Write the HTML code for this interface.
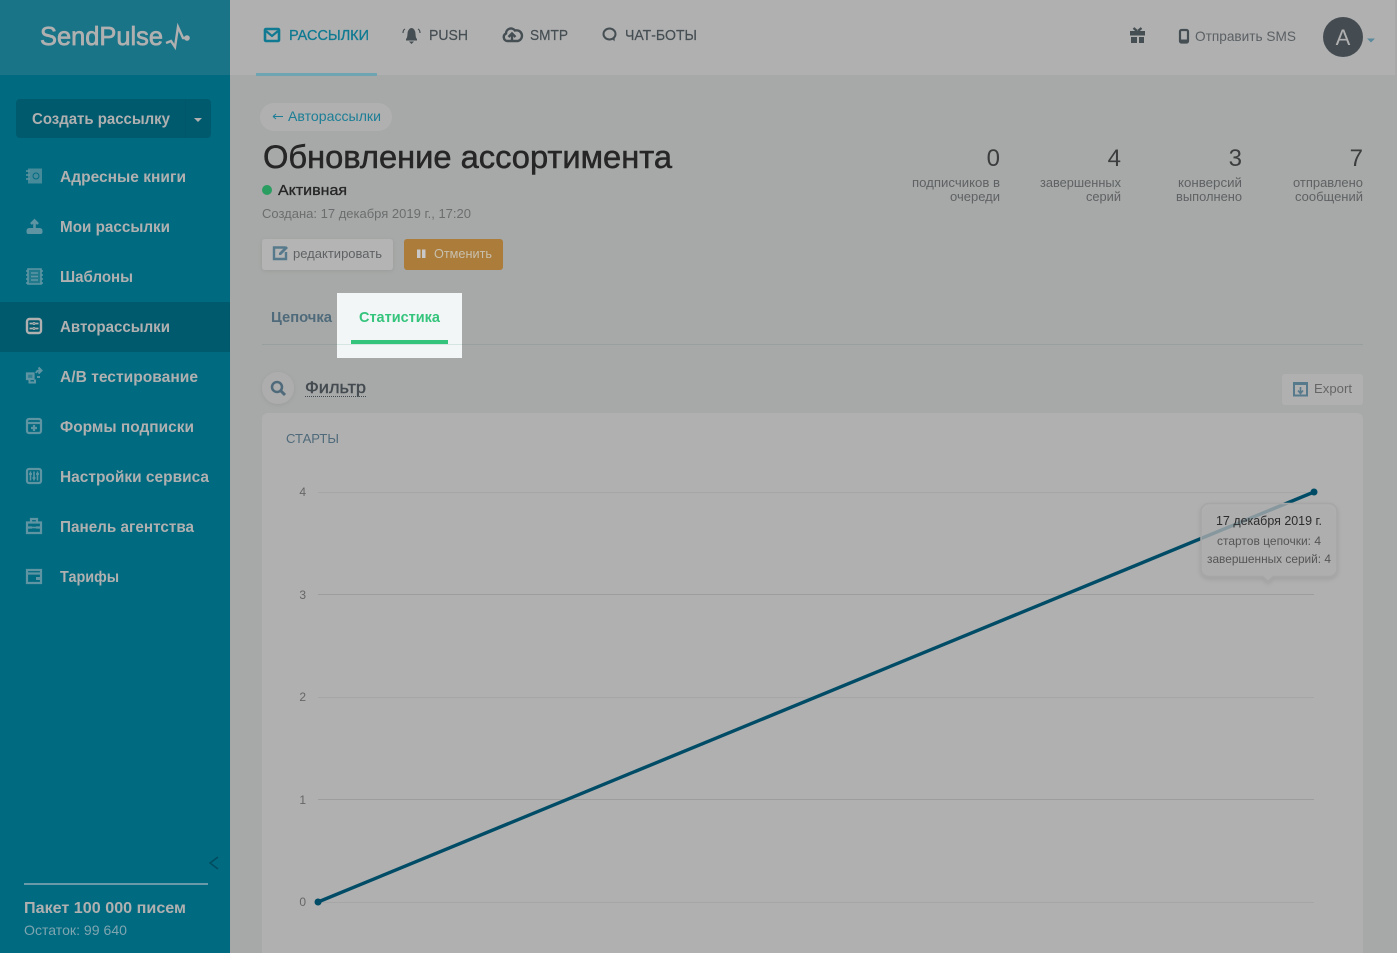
<!DOCTYPE html>
<html lang="ru"><head><meta charset="utf-8"><title>SendPulse</title>
<style>
html,body{margin:0;padding:0;width:1397px;height:953px;overflow:hidden;background:#a7a9a8}
svg{display:block}
text{font-family:"Liberation Sans","DejaVu Sans",sans-serif}
.s{font-weight:700;font-size:15.5px;fill:#b0b0b0}
.ic{fill:none;stroke:#5f95a3;stroke-width:2.200}
.n{font-size:14.5px;fill:#454e53;stroke:#454e53;stroke-width:.2}
.lb{font-size:13px;fill:#5f6264;text-anchor:end}
.num{font-size:24px;fill:#3b3d3e;text-anchor:end}
.ax{font-size:12px;fill:#666;text-anchor:end}
.gr{stroke:#9d9d9d;stroke-width:1}
.gl{stroke:#a6a6a6;stroke-width:1}
</style></head><body>
<svg width="1397" height="953" viewBox="0 0 1397 953" xmlns="http://www.w3.org/2000/svg">
<defs>
<filter id="sh" x="-20%" y="-20%" width="140%" height="150%"><feDropShadow dx="0" dy="2" stdDeviation="2.500" flood-color="#000" flood-opacity=".12"/></filter>
<filter id="sh2" x="-20%" y="-20%" width="140%" height="150%"><feDropShadow dx="0" dy="1" stdDeviation="2" flood-color="#000" flood-opacity=".08"/></filter>
</defs>
<rect width="1397" height="953" fill="#a7a9a8"/>
<!-- top bar -->
<rect x="230" width="1167" height="75" fill="#b0b0b0"/>
<rect x="1395" width="2" height="75" fill="#a9a9a9"/>
<rect x="256" y="73" width="121" height="3" fill="#6fa5b3"/>
<!-- sidebar -->
<rect width="230" height="953" fill="#006a80"/>
<rect width="230" height="75" fill="#1a7488"/>
<text x="40" y="45" font-size="26" fill="#b0b0b0" stroke="#b0b0b0" stroke-width=".7" textLength="123" lengthAdjust="spacingAndGlyphs">SendPulse</text>
<path d="M166 43L171 41 175 47 178 27 183 38H187" fill="none" stroke="#b0b0b0" stroke-width="2.400"/><circle cx="187" cy="38" r="2.800" fill="#b0b0b0"/>
<rect x="16" y="99" width="195" height="39" rx="4" fill="#005a6e"/>
<rect x="185" y="99" width="1" height="39" fill="#00566a"/>
<text class="s" x="32" y="124" textLength="138" lengthAdjust="spacingAndGlyphs">Создать рассылку</text>
<path d="M194 118h8l-4 4z" fill="#b0b0b0"/>
<rect y="302" width="230" height="50" fill="#005a6e"/>

<g class="ic">
<path d="M28 168.500h14v15H28z" fill="#5f95a3" fill-opacity=".75" stroke="none"/><path d="M26 171h4M26 175h4M26 179h4" stroke-width="1.500"/><circle cx="36" cy="176" r="3" stroke="#006a80" stroke-width="1"/>
<path d="M26.500 231q0-3 3-3h10q3 0 3 3v1q0 2-2 2H28.500q-2 0-2-2z" fill="#5f95a3" stroke="none"/><path d="M34.500 230v-9M31 224l3.500-3.500 3.500 3.500" stroke-width="2.600"/>
<path d="M28 269h13v15H28z" fill="#5f95a3" fill-opacity=".35" stroke-width="1.600"/><path d="M26 271h2M26 275h2M26 279h2M26 283h2M41 271h2M41 275h2M41 279h2M41 283h2M31 273h7M31 276.500h7M31 280h7" stroke-width="1.600"/>
<g stroke="#b0b0b0"><rect x="27" y="319" width="14" height="14" rx="2.500" stroke-width="2.400"/><path d="M29.500 323.500h3M35.500 323.500h3M29.500 328.500h3M35.500 328.500h3" stroke-width="1.800"/><circle cx="34" cy="323.500" r="1" stroke-width="1"/><circle cx="34" cy="328.500" r="1" stroke-width="1"/></g>
<path d="M27 373.500h6.500v5.500H27z" fill="#5f95a3" fill-opacity=".5"/><path d="M29.500 380v2.500h5.500v-3" stroke-width="2"/><path d="M36 373q1-3 5-2.500M38.500 367.500l3 3-3 3M37 377h3" stroke-width="2"/>
<rect x="27" y="419" width="14" height="14" rx="2"/><path d="M27 423h14M34 425v6M31 428h6"/>
<rect x="27" y="469" width="14" height="14" rx="2"/><path d="M30.500 471.500v9M34 471.500v9M37.500 471.500v9" stroke-width="1.600"/><path d="M29 474h3M32.500 478h3M36 474h3" stroke-width="1.800"/>
<path d="M27 522.500h14v10.500H27zM31 522v-3h6v3M27 527.500h5M36 527.500h5"/><path d="M32 527.500h4" stroke-width="1.600"/>
<path d="M27 570h14v13H27zM27 573.500h14" /><path d="M36 577h5v3h-5z" fill="#5f95a3" stroke="none"/>
</g>
<text class="s" x="60" y="182" textLength="126" lengthAdjust="spacingAndGlyphs">Адресные книги</text>
<text class="s" x="60" y="232" textLength="110" lengthAdjust="spacingAndGlyphs">Мои рассылки</text>
<text class="s" x="60" y="282" textLength="73" lengthAdjust="spacingAndGlyphs">Шаблоны</text>
<text class="s" x="60" y="332" textLength="110" lengthAdjust="spacingAndGlyphs">Авторассылки</text>
<text class="s" x="60" y="382" textLength="138" lengthAdjust="spacingAndGlyphs">А/В тестирование</text>
<text class="s" x="60" y="432" textLength="134" lengthAdjust="spacingAndGlyphs">Формы подписки</text>
<text class="s" x="60" y="482" textLength="149" lengthAdjust="spacingAndGlyphs">Настройки сервиса</text>
<text class="s" x="60" y="532" textLength="134" lengthAdjust="spacingAndGlyphs">Панель агентства</text>
<text class="s" x="60" y="582" textLength="59" lengthAdjust="spacingAndGlyphs">Тарифы</text>
<path d="M218 857l-8 6 8 6" fill="none" stroke="#004c5f" stroke-width="1.500"/>
<rect x="24" y="883" width="184" height="2" fill="#6a9aa8"/>
<text class="s" x="24" y="913" textLength="162" lengthAdjust="spacingAndGlyphs">Пакет 100 000 писем</text>
<text x="24" y="935" font-size="14" fill="#7fa5b0" textLength="103" lengthAdjust="spacingAndGlyphs">Остаток: 99 640</text>

<!-- nav -->
<rect x="265" y="29" width="14" height="12" rx="1" fill="none" stroke="#0f7a92" stroke-width="2.600"/><path d="M266 31l6 5 6-5" fill="none" stroke="#0f7a92" stroke-width="2.200"/>
<text x="289" y="40" font-size="14.500" fill="#0f7a92" stroke="#0f7a92" stroke-width=".3" textLength="80" lengthAdjust="spacingAndGlyphs">РАССЫЛКИ</text>
<path d="M406 39c2-2 1-5 2-8 1-2 2-3 3.500-3s2.500 1 3.500 3c1 3 0 6 2 8v1.500h-11zM409 41.500h5l-2.500 2.500z" fill="#454e53"/><path d="M403 33q0-3 2-4M420 33q0-3-2-4" fill="none" stroke="#454e53" stroke-width="1.200"/>
<text class="n" x="429" y="40" textLength="39" lengthAdjust="spacingAndGlyphs">PUSH</text>
<path d="M507 41a4 4 0 0 1-1-7.500 5 5 0 0 1 9-3 4.500 4.500 0 0 1 3 10.500z" fill="none" stroke="#454e53" stroke-width="2.400"/><path d="M512 42v-8M508.500 37l3.500-3.500 3.500 3.500" fill="none" stroke="#454e53" stroke-width="2.400"/>
<text class="n" x="530" y="40" textLength="38" lengthAdjust="spacingAndGlyphs">SMTP</text>
<ellipse cx="609.500" cy="34" rx="6" ry="5.500" fill="none" stroke="#454e53" stroke-width="2"/><path d="M612 38.500l2.500 3 .3-4z" fill="#454e53"/>
<text class="n" x="625" y="40" textLength="72" lengthAdjust="spacingAndGlyphs">ЧАТ-БОТЫ</text>
<path d="M1130 31h15v4.500h-15zM1131 37h6v6h-6zM1139 37h5v6h-5z" fill="#454e53"/><path d="M1137 31l-3.500-3M1138 31l3.500-3" stroke="#454e53" stroke-width="2.400" fill="none"/>
<rect x="1180" y="30" width="8" height="12.500" rx="1.500" fill="none" stroke="#454e53" stroke-width="2.200"/><rect x="1181" y="39.500" width="6" height="3" fill="#454e53"/>
<text x="1195" y="41" font-size="14" fill="#5b6064" textLength="101" lengthAdjust="spacingAndGlyphs">Отправить SMS</text>
<circle cx="1343" cy="37" r="20" fill="#444c52"/>
<text x="1343" y="45" font-size="22" fill="#b0b0b0" text-anchor="middle">A</text>
<path d="M1367 38.500h8l-4 4z" fill="#5a8a9b"/>

<!-- head -->
<rect x="260" y="103" width="132" height="28" rx="14" fill="#b0b0b0"/>
<path d="M273 116.500h10M273 116.500l3-2.500M273 116.500l3 2.500" stroke="#1b7e96" fill="none"/>
<text x="288" y="121" font-size="14" fill="#1b7e96" textLength="93" lengthAdjust="spacingAndGlyphs">Авторассылки</text>
<text x="263" y="168" font-size="32" fill="#262626" stroke="#262626" stroke-width=".5" textLength="409" lengthAdjust="spacingAndGlyphs">Обновление ассортимента</text>
<circle cx="267" cy="190" r="5" fill="#2a9d60"/>
<text x="278" y="195" font-size="14.500" fill="#262626" stroke="#262626" stroke-width=".3" textLength="69" lengthAdjust="spacingAndGlyphs">Активная</text>
<text x="262" y="218" font-size="13" fill="#6b6e6f" textLength="209" lengthAdjust="spacingAndGlyphs">Создана: 17 декабря 2019 г., 17:20</text>
<rect x="262" y="239" width="131" height="31" rx="3" fill="#b4b4b4" filter="url(#sh2)"/>
<path d="M284 248v-.500h-10v11.500h12v-7" fill="none" stroke="#567a8c" stroke-width="2.400"/><path d="M279 253l7-7 2 2-7 7h-2z" fill="#567a8c"/>
<text x="293" y="258" font-size="13" fill="#5f6264" textLength="89" lengthAdjust="spacingAndGlyphs">редактировать</text>
<rect x="404" y="239" width="99" height="31" rx="3" fill="#ab7c3a"/>
<path d="M417 249.500h3.500v8.500H417zM422 249.500h3.500v8.500H422z" fill="#c8c8c8"/>
<text x="434" y="258" font-size="13" fill="#c8c0ae" textLength="58" lengthAdjust="spacingAndGlyphs">Отменить</text>

<!-- stats -->
<text class="num" x="1000" y="166">0</text><text class="num" x="1121" y="166">4</text><text class="num" x="1242" y="166">3</text><text class="num" x="1363" y="166">7</text>
<text class="lb" x="1000" y="187" textLength="88" lengthAdjust="spacingAndGlyphs">подписчиков в</text><text class="lb" x="1000" y="201" textLength="50" lengthAdjust="spacingAndGlyphs">очереди</text>
<text class="lb" x="1121" y="187" textLength="81" lengthAdjust="spacingAndGlyphs">завершенных</text><text class="lb" x="1121" y="201" textLength="35" lengthAdjust="spacingAndGlyphs">серий</text>
<text class="lb" x="1242" y="187" textLength="64" lengthAdjust="spacingAndGlyphs">конверсий</text><text class="lb" x="1242" y="201" textLength="66" lengthAdjust="spacingAndGlyphs">выполнено</text>
<text class="lb" x="1363" y="187" textLength="70" lengthAdjust="spacingAndGlyphs">отправлено</text><text class="lb" x="1363" y="201" textLength="68" lengthAdjust="spacingAndGlyphs">сообщений</text>

<!-- tabs -->
<rect x="262" y="344" width="1101" height="1" fill="#97a09f"/>
<text x="271" y="322" font-size="15" font-weight="700" fill="#4f6a7a" textLength="61" lengthAdjust="spacingAndGlyphs">Цепочка</text>
<rect x="337" y="293" width="125" height="65" fill="#f2f6f7"/>
<rect x="337" y="344" width="125" height="1" fill="#d5e5e2"/>
<text x="359" y="322" font-size="15" font-weight="700" fill="#34c47c" textLength="81" lengthAdjust="spacingAndGlyphs">Статистика</text>
<rect x="351" y="340" width="97" height="4" fill="#34c47c"/>

<!-- filter -->
<circle cx="278" cy="388" r="16" fill="#adadad" filter="url(#sh2)"/>
<circle cx="277" cy="387" r="5" fill="none" stroke="#4f6a7a" stroke-width="2.500"/><path d="M281 391l4 4" stroke="#4f6a7a" stroke-width="3" fill="none"/>
<text x="305" y="393" font-size="17" fill="#444b50" stroke="#444b50" stroke-width=".4" textLength="61" lengthAdjust="spacingAndGlyphs">Фильтр</text>
<path d="M305 396.500h61" stroke="#444b50" stroke-dasharray="1 1" fill="none"/>
<rect x="1282" y="374" width="81" height="31" rx="3" fill="#b0b0b0"/>
<path d="M1294 383h13v12.500h-13z" fill="none" stroke="#567a8c" stroke-width="2"/><path d="M1294 383.500h13" stroke="#567a8c" stroke-width="3"/><path d="M1300.500 387v5M1298 390.500l2.500 3 2.500-3" fill="none" stroke="#567a8c" stroke-width="1.600"/>
<text x="1314" y="393" font-size="13" fill="#666" textLength="38" lengthAdjust="spacingAndGlyphs">Export</text>

<!-- card -->
<rect x="262" y="413" width="1101" height="560" rx="6" fill="#b0b0b0"/>
<text x="286" y="443" font-size="13" fill="#4f6a7a" textLength="53" lengthAdjust="spacingAndGlyphs">СТАРТЫ</text>
<path class="gl" d="M318 492.500h996M318 697.500h996M318 902.500h996"/>
<path class="gr" d="M318 594.500h996M318 799.500h996"/>
<text class="ax" x="306" y="496">4</text><text class="ax" x="306" y="599">3</text><text class="ax" x="306" y="701">2</text><text class="ax" x="306" y="804">1</text><text class="ax" x="306" y="906">0</text>
<path d="M318 902L1314 492" stroke="#004c66" stroke-width="3.400" fill="none"/>
<circle cx="318" cy="902" r="3.500" fill="#004c66"/><circle cx="1314" cy="492" r="3.500" fill="#004c66"/>
<!-- tooltip -->
<path d="M1209 503.500h120a8 8 0 0 1 8 8v57a8 8 0 0 1-8 8h-56l-5 5-5-5h-54a8 8 0 0 1-8-8v-57a8 8 0 0 1 8-8z" fill="#b0b0b0" fill-opacity=".75" stroke="#a6a6a6" stroke-width="1.500" filter="url(#sh)"/>
<text x="1216" y="525" font-size="13" fill="#2c2c2c" textLength="106" lengthAdjust="spacingAndGlyphs">17 декабря 2019 г.</text>
<text x="1217" y="545" font-size="12" fill="#555" textLength="104" lengthAdjust="spacingAndGlyphs">стартов цепочки: 4</text>
<text x="1207" y="563" font-size="12" fill="#555" textLength="124" lengthAdjust="spacingAndGlyphs">завершенных серий: 4</text>
</svg>
</body></html>
